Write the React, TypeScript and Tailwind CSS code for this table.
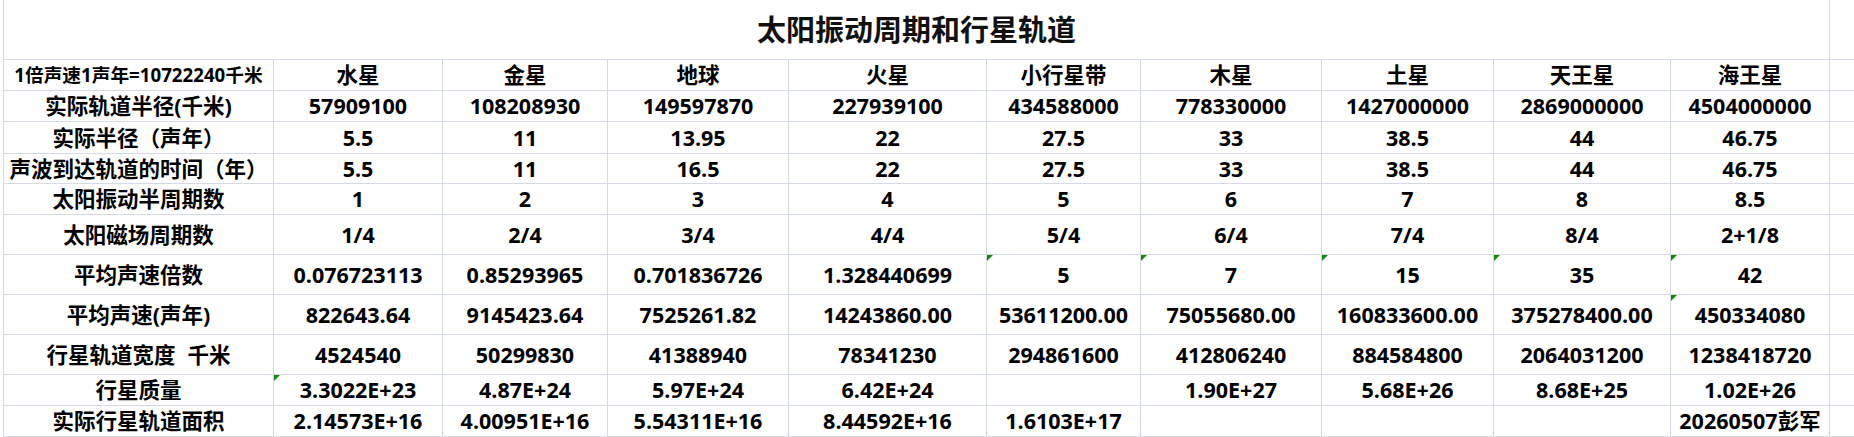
const planets = ['水星', '金星', '地球', '火星', '小行星带', '木星', '土星', '天王星', '海王星'];

type Row = { label: React.ReactNode; key: string; values: string[]; flags?: number[] };

const rows: Row[] = [
  {
    key: 'r1',
    label: '实际轨道半径(千米)',
    values: ['57909100', '108208930', '149597870', '227939100', '434588000', '778330000', '1427000000', '2869000000', '4504000000'],
  },
  { key: 'r2', label: '实际半径（声年）', values: ['5.5', '11', '13.95', '22', '27.5', '33', '38.5', '44', '46.75'] },
  { key: 'r3', label: '声波到达轨道的时间（年）', values: ['5.5', '11', '16.5', '22', '27.5', '33', '38.5', '44', '46.75'] },
  { key: 'r4', label: '太阳振动半周期数', values: ['1', '2', '3', '4', '5', '6', '7', '8', '8.5'] },
  { key: 'r5', label: '太阳磁场周期数', values: ['1/4', '2/4', '3/4', '4/4', '5/4', '6/4', '7/4', '8/4', '2+1/8'] },
  {
    key: 'r6',
    label: '平均声速倍数',
    values: ['0.076723113', '0.85293965', '0.701836726', '1.328440699', '5', '7', '15', '35', '42'],
    flags: [4, 5, 6, 7, 8],
  },
  {
    key: 'r7',
    label: '平均声速(声年)',
    values: ['822643.64', '9145423.64', '7525261.82', '14243860.00', '53611200.00', '75055680.00', '160833600.00', '375278400.00', '450334080'],
    flags: [8],
  },
  {
    key: 'r8',
    label: (
      <>
        行星轨道宽度<span className="inline-block w-[12px]" />千米
      </>
    ),
    values: ['4524540', '50299830', '41388940', '78341230', '294861600', '412806240', '884584800', '2064031200', '1238418720'],
  },
  {
    key: 'r9',
    label: '行星质量',
    values: ['3.3022E+23', '4.87E+24', '5.97E+24', '6.42E+24', '', '1.90E+27', '5.68E+26', '8.68E+25', '1.02E+26'],
    flags: [0],
  },
  {
    key: 'r10',
    label: '实际行星轨道面积',
    values: ['2.14573E+16', '4.00951E+16', '5.54311E+16', '8.44592E+16', '1.6103E+17', '', '', '', '20260507彭军'],
  },
];

// thin green "number stored as text" marker in the cell corner
function Flag() {
  return (
    <span className="absolute left-0 top-0 h-0 w-0 border-t-[6px] border-r-[6px] border-t-[#16870f] border-r-transparent" />
  );
}

function Cell({ children, flag, last }: { children?: React.ReactNode; flag?: boolean; last?: boolean }) {
  return (
    <div
      className={`relative flex items-center justify-center whitespace-nowrap border-b border-[#d5dbe6] ${
        last ? '' : 'border-r'
      }`}
    >
      {flag && <Flag />}
      {children}
    </div>
  );
}

export default function App() {
  return (
    <div className="h-[437px] w-[1854px] overflow-hidden bg-white">
      <div
        className="ml-[3px] grid h-[437px] grid-cols-[270px_169px_165px_181px_198px_154px_181px_172px_177px_159px_1fr] grid-rows-[60px_31px_31px_32px_30px_31px_40px_40px_40px_40px_31px_31px] border-l border-[#d5dbe6] text-[21.5px] font-bold leading-none text-black"
        style={{ fontFamily: '"Open Sans", "Noto Sans CJK SC", sans-serif' }}
      >
        {/* merged title cell */}
        <div className="col-span-10 flex items-center justify-center border-r border-b border-[#d5dbe6] text-[29px] text-[#111]">
          太阳振动周期和行星轨道
        </div>
        <Cell last />

        {/* header row */}
        <Cell>
          <span className="text-[18.7px]">1倍声速1声年=10722240千米</span>
        </Cell>
        {planets.map((p) => (
          <Cell key={p}>{p}</Cell>
        ))}
        <Cell last />

        {rows.map((r) => (
          <div key={r.key} className="contents">
            <Cell>{r.label}</Cell>
            {r.values.map((v, i) => (
              <Cell key={i} flag={r.flags?.includes(i)}>
                {v}
              </Cell>
            ))}
            <Cell last />
          </div>
        ))}
      </div>
    </div>
  );
}
